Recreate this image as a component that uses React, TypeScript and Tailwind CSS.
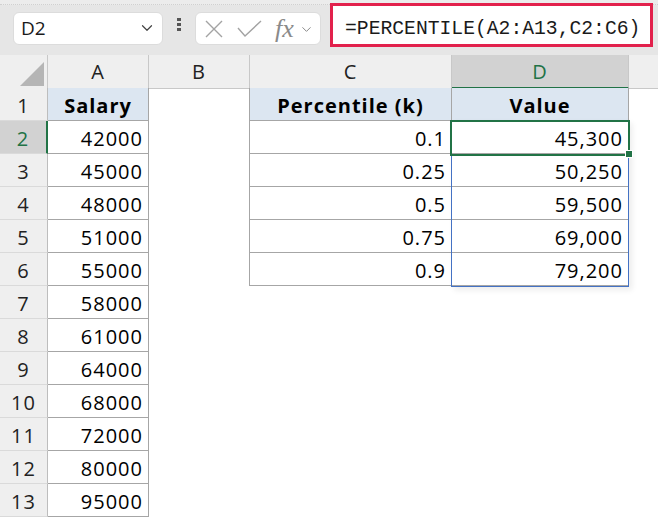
import { ChevronDown } from 'lucide-react';

const salaries = [42000, 45000, 48000, 51000, 55000, 58000, 61000, 64000, 68000, 72000, 80000, 95000];
const pct = [
  ['0.1', '45,300'],
  ['0.25', '50,250'],
  ['0.5', '59,500'],
  ['0.75', '69,000'],
  ['0.9', '79,200'],
];

const cols = 'grid grid-cols-[48px_101px_101px_202px_177px_1fr]';
const line = 'border-[#a6a6a6]';

const Toolbar = () => {
  return (
    <div className="relative flex h-[55px] bg-[#e6e6e6] pl-[13px] font-['Open_Sans',sans-serif]">
      <div className="absolute left-0 top-0 h-[5px] w-full bg-[#ececec] border-b border-dotted border-[#d0d0d0]" />
      <div className="relative mt-[12px] flex h-[33px] w-[150px] items-start justify-between rounded-[6px] border border-[#dcdcdc] bg-white pl-[7px] pr-[6px] pt-[3px]">
        <span className="text-[19px] leading-[24px] text-[#1a1a1a]">D2</span>
        <ChevronDown size={18} strokeWidth={1.6} className="mt-[3px] text-[#444]" />
      </div>
      <div className="relative ml-[14px] mt-[18px] flex flex-col gap-[2px]">
        <span className="h-[3px] w-[4px] bg-[#555]" />
        <span className="h-[3px] w-[4px] bg-[#555]" />
        <span className="h-[3px] w-[4px] bg-[#555]" />
      </div>
      <div className="relative ml-[14px] mt-[12px] flex h-[33px] w-[126px] items-center rounded-[6px] border border-[#dcdcdc] bg-white pl-[9px]">
        <svg width="18" height="18" viewBox="0 0 18 18" className="text-[#a3a3a3]">
          <path d="M1 1 L17 17 M17 1 L1 17" stroke="currentColor" strokeWidth="1.4" fill="none" />
        </svg>
        <svg width="25" height="17" viewBox="0 0 25 17" className="ml-[14px] text-[#a3a3a3]">
          <path d="M1 8 L8 16 L24 1" stroke="currentColor" strokeWidth="1.4" fill="none" />
        </svg>
        <span className="ml-[13px] font-['Liberation_Serif',serif] text-[26px] italic leading-none text-[#8a8a8a]">fx</span>
        <ChevronDown size={15} strokeWidth={1.6} className="ml-[5px] mt-[2px] text-[#8a8a8a]" />
      </div>
      <div className="relative ml-[9px] mt-[3px] flex h-[44px] w-[323px] items-start border-[3px] border-[#e2214c] bg-white pl-[12px] pt-[12px]">
        <span className="font-['Liberation_Mono',monospace] text-[19.7px] leading-[22px] text-[#1a1a1a]">
          =PERCENTILE(A2:A13,C2:C6)
        </span>
      </div>
    </div>
  );
};

const HeaderRow = () => {
  const hdr = 'flex items-start justify-center pt-[5px] border-r border-b border-[#c8c8c8]';
  return (
    <div className={`${cols} h-[33px] bg-[#efefef] text-[20px] leading-[24px] text-[#222]`}>
      <div className="border-r border-b border-[#c8c8c8]">
        <svg width="48" height="33">
          <polygon points="20,31 44,7 44,31" fill="#b5b5b5" />
        </svg>
      </div>
      <div className={hdr}>A</div>
      <div className={hdr}>B</div>
      <div className={hdr}>C</div>
      <div className="flex items-start justify-center pt-[5px] border-r border-[#c8c8c8] border-b-2 border-b-[#217346] bg-[#d2d2d2] text-[#217346]">
        D
      </div>
      <div className="border-b border-[#c8c8c8]" />
    </div>
  );
};

const Row = ({ n }: { n: number }) => {
  const inTable = n <= 6;
  const head = n === 1;
  const cell = 'flex items-start pt-[6px] pr-[5px] justify-end';
  return (
    <div className={`${cols} h-[33px] text-[20px] leading-[24px] text-black`}>
      <div
        className={
          n === 2
            ? 'flex items-start justify-center pt-[6px] bg-[#d2d2d2] border-r-2 border-r-[#217346] border-b border-b-[#dadada] text-[#217346]'
            : 'flex items-start justify-center pt-[6px] bg-[#efefef] border-r border-r-[#bdbdbd] border-b border-b-[#dadada] text-[#222]'
        }
      >
        {n}
      </div>
      <div
        className={
          head
            ? `flex items-start justify-center pt-[6px] font-bold bg-[#dce6f1] border-r border-b ${line}`
            : `${cell} border-r border-b ${line}`
        }
      >
        {head ? 'Salary' : salaries[n - 2]}
      </div>
      <div className={inTable ? `border-r ${line}` : ''} />
      {inTable ? (
        <div
          className={
            head
              ? `flex items-start justify-center pt-[6px] font-bold bg-[#dce6f1] border-r border-b ${line}`
              : `${cell} border-r border-b ${line}`
          }
        >
          {head ? 'Percentile (k)' : pct[n - 2][0]}
        </div>
      ) : (
        <div />
      )}
      {inTable ? (
        <div
          className={
            head
              ? `flex items-start justify-center pt-[6px] font-bold bg-[#dce6f1] border-r border-b ${line}`
              : `${cell} border-r border-b ${line}`
          }
        >
          {head ? 'Value' : pct[n - 2][1]}
        </div>
      ) : (
        <div />
      )}
      <div />
    </div>
  );
};

export default function App() {
  return (
    <div className="h-[519px] w-[658px] overflow-hidden bg-white">
      <Toolbar />
      <div className="relative font-['Open_Sans',sans-serif] tracking-[1px]">
        <HeaderRow />
        {Array.from({ length: 13 }, (_, i) => (
          <Row key={i} n={i + 1} />
        ))}
        {/* spill range outline */}
        <div className="pointer-events-none absolute left-[451px] top-[65px] h-[167px] w-[178px] border border-[#4472c4] shadow-[3px_3px_6px_rgba(0,0,0,0.08)]" />
        {/* active cell */}
        <div className="pointer-events-none absolute left-[450px] top-[65px] h-[36px] w-[180px] border-2 border-[#217346]" />
        <div className="pointer-events-none absolute left-[626px] top-[96px] h-[6px] w-[6px] bg-[#217346] ring-1 ring-white" />
      </div>
    </div>
  );
}
